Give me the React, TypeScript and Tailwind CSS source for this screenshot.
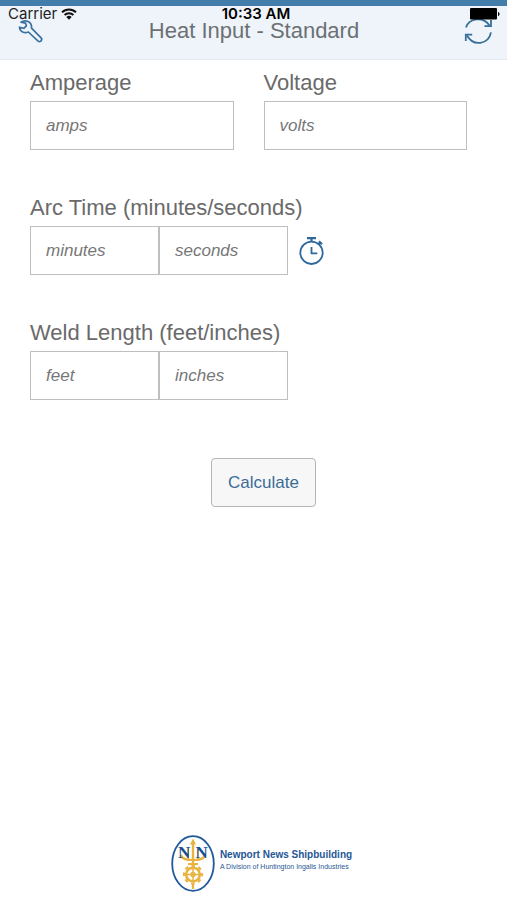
import { useState } from 'react';

const inputClass =
  'h-[49px] border border-[#bfbfbf] bg-white px-[15px] text-[17px] text-[#666] placeholder:italic placeholder:text-[#777] outline-none';
const labelClass = 'text-[22px] leading-9 text-[#6a6a6a]';

const StatusBar = () => (
  <div className="pointer-events-none absolute inset-x-0 top-0 grid h-4 grid-cols-3 items-center pl-2 pr-[7px] font-['Inter',sans-serif] text-[15px] leading-4">
    <div className="flex items-center gap-1 text-[#222]">
      <span>Carrier</span>
      <svg width="16" height="12" viewBox="0 0 16 12" fill="none" stroke="#111" strokeWidth="2">
        <path d="M1 4.3a10 10 0 0 1 14 0" />
        <path d="M3.6 7a6.2 6.2 0 0 1 8.8 0" />
        <path d="M8 11.8 5.3 9.1a3.8 3.8 0 0 1 5.4 0Z" fill="#111" stroke="none" />
      </svg>
    </div>
    <span className="pl-1 text-center font-semibold text-black">10:33 AM</span>
    <svg className="justify-self-end" width="30" height="12" viewBox="0 0 30 12" fill="#000">
      <rect width="27" height="11.5" rx="1" />
      <path d="M28 4c2 .3 2 3.7 0 4Z" />
    </svg>
  </div>
);

const WrenchIcon = () => (
  <svg width="26" height="26" viewBox="0 0 26 26" fill="none" stroke="#3a709f" strokeWidth="1.7" strokeLinejoin="round">
    <path d="M3 4.200C7.500 1 14.200 3.800 13.500 10.200l9.600 9.700c1.800 1.900-1 4.800-3 3.200L10.400 14C6.500 15.600 1.800 13.800 1.500 9.200l4.300 1.100 2.600-2.500-.9-2.700Z" />
  </svg>
);

const RefreshIcon = () => (
  <svg width="28" height="28" viewBox="0 0 28 28" fill="none" stroke="#386f99" strokeWidth="1.8">
    <path d="M2 10.500C5 1 19 -1 25.500 8.500" />
    <path d="M27 3v6.200h-6.500" />
    <path d="M27 15.400C24.500 27.500 9.500 30 3 18.500" />
    <path d="M1.800 24v-6.300h6.400" />
  </svg>
);

const StopwatchIcon = () => (
  <svg width="26" height="28" viewBox="0 0 26 28" fill="none" stroke="#2f689b" strokeWidth="1.8">
    <circle cx="12.5" cy="15.8" r="11.2" />
    <path d="M12.5 10v6.300h5.800" />
    <path d="M8 1.200h9M12.500 1v4" strokeWidth="2.2" />
    <path d="m19.500 7.300 2-2M20 4.300l3 3" strokeWidth="2.2" />
  </svg>
);

const LogoMark = () => (
  <svg width="44" height="57" viewBox="0 0 44 57" fill="none">
    <ellipse cx="22" cy="28.5" rx="20.8" ry="27.3" fill="#fff" stroke="#20599a" strokeWidth="1.8" />
    <g stroke="#e8b43f">
      <path d="M22 6v27" strokeWidth="2.4" />
      <path d="M10 20c1 4.500 6 5 12 5s11-.5 12-5" strokeWidth="2.2" />
      <path d="M17.200 13v12M26.800 13v12" strokeWidth="1.6" />
      <path d="M17 29h10" strokeWidth="2" />
      <circle cx="22" cy="39.5" r="6.8" strokeWidth="2.6" />
      <circle cx="22" cy="39.5" r="9" strokeWidth="2.2" strokeDasharray="3.534 3.534" strokeDashoffset="1.767" />
      <path d="M22 33v13M15.500 39.500h13" strokeWidth="1.5" />
      <circle cx="22" cy="39.5" r="2" strokeWidth="1.4" />
      <path d="M22 48v6" strokeWidth="2.2" />
    </g>
    <path d="m22 3.500-3 6h6Z" fill="#e8b43f" />
    <g fill="#18508f" fontFamily="Liberation Serif, serif" fontSize="17" fontWeight="700">
      <text x="7" y="23">N</text>
      <text x="24.500" y="23">N</text>
    </g>
  </svg>
);

const App = () => {
  const [values, setValues] = useState({
    amps: '',
    volts: '',
    minutes: '',
    seconds: '',
    feet: '',
    inches: '',
  });

  const field = (name: keyof typeof values) => ({
    id: name,
    placeholder: name,
    inputMode: 'decimal' as const,
    value: values[name],
    onChange: (e: React.ChangeEvent<HTMLInputElement>) =>
      setValues({ ...values, [name]: e.target.value }),
  });

  const reset = () =>
    setValues({ amps: '', volts: '', minutes: '', seconds: '', feet: '', inches: '' });

  return (
    <div className="flex min-h-screen flex-col bg-white font-['Liberation_Sans',sans-serif]">
      <header className="relative flex justify-between border-b border-t-[6px] border-b-[#e0eaf4] border-t-[#437dab] bg-[#eef4fa] pb-[14px] pl-[18px] pr-[15px] pt-[11px]">
        <button type="button" aria-label="Settings">
          <WrenchIcon />
        </button>
        <h1 className="text-[22px] leading-7 text-[#6c7073]">Heat Input - Standard</h1>
        <button type="button" aria-label="Reset" onClick={reset}>
          <RefreshIcon />
        </button>
        <StatusBar />
      </header>

      <form className="flex flex-col gap-10 pl-[30px] pr-10 pt-[5px]" onSubmit={(e) => e.preventDefault()}>
        <div className="grid grid-cols-2 gap-[30px]">
          <div className="flex flex-col">
            <label htmlFor="amps" className={labelClass}>Amperage</label>
            <input {...field('amps')} className={`${inputClass} w-full`} />
          </div>
          <div className="flex flex-col">
            <label htmlFor="volts" className={labelClass}>Voltage</label>
            <input {...field('volts')} className={`${inputClass} w-full`} />
          </div>
        </div>

        <div className="flex flex-col">
          <label htmlFor="minutes" className={labelClass}>Arc Time (minutes/seconds)</label>
          <div className="flex items-center">
            <input {...field('minutes')} className={`${inputClass} w-[129px]`} />
            <input {...field('seconds')} aria-label="Arc time seconds" className={`${inputClass} w-[129px]`} />
            <button type="button" aria-label="Start stopwatch" className="ml-[11px]">
              <StopwatchIcon />
            </button>
          </div>
        </div>

        <div className="flex flex-col">
          <label htmlFor="feet" className={labelClass}>Weld Length (feet/inches)</label>
          <div className="flex items-center">
            <input {...field('feet')} className={`${inputClass} w-[129px]`} />
            <input {...field('inches')} aria-label="Weld length inches" className={`${inputClass} w-[129px]`} />
          </div>
        </div>

        <div className="flex justify-center pl-[30px] pt-[18px]">
          <button
            type="submit"
            className="h-[49px] rounded-[4px] border border-[#b5b5b5] bg-[#f7f7f7] px-4 text-[17px] text-[#3b6c99]"
          >
            Calculate
          </button>
        </div>
      </form>

      <footer className="mt-auto flex items-center justify-center gap-[5px] pb-2 pl-4 pt-6">
        <LogoMark />
        <div className="flex flex-col pb-2 text-[#1f5796]">
          <span className="text-[10px] font-bold leading-[14px]">Newport News Shipbuilding</span>
          <span className="text-[7px] leading-[10px]">A Division of Huntington Ingalls Industries</span>
        </div>
      </footer>
    </div>
  );
};

export default App;
